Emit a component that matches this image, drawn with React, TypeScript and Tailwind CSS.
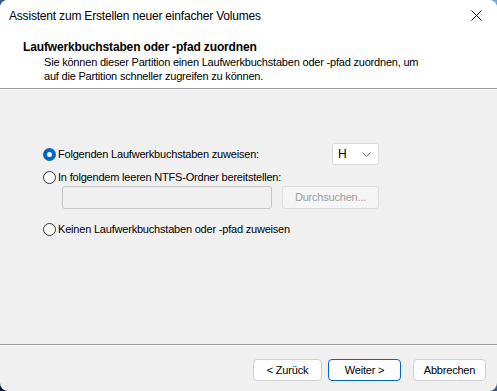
import React from "react";

function Radio({ checked }: { checked?: boolean }) {
  if (checked) {
    return (
      <span className="flex h-[13px] w-[13px] shrink-0 items-center justify-center rounded-full bg-[#0067c0]">
        <span className="h-[5px] w-[5px] rounded-full bg-white" />
      </span>
    );
  }
  return <span className="block h-[13px] w-[13px] shrink-0 rounded-full border border-[#333] bg-white" />;
}

export default function App() {
  return (
    <div
      className="h-[391px] w-[497px] overflow-hidden bg-gradient-to-tr from-[#0a1a38] to-[#6fa7d6] text-[11px] leading-none tracking-[-0.2px] text-black"
      style={{ fontFamily: '"Liberation Sans", Arial, sans-serif' }}
    >
      <div className="flex h-full w-full flex-col overflow-hidden rounded-[8px] bg-[#f0f0f0]">
        {/* title + header */}
        <div className="bg-white">
          <div className="flex h-[30px] items-center pl-[9px] pr-[14px]">
            <span className="flex-1 pt-[1px] text-[12px] tracking-[-0.19px]">
              Assistent zum Erstellen neuer einfacher Volumes
            </span>
            <svg width="11" height="11" viewBox="0 0 11 11" className="mr-[1px]">
              <path d="M0.5 0.5 L10.5 10.5 M10.5 0.5 L0.5 10.5" stroke="#111" strokeWidth="1" />
            </svg>
          </div>
          <div className="pl-[23px] pt-[11px]">
            <div className="h-[12px] text-[12px] font-bold tracking-[-0.15px]">
              Laufwerkbuchstaben oder -pfad zuordnen
            </div>
            <div className="mt-[2px] pl-[21px] leading-[14px]">
              Sie können dieser Partition einen Laufwerkbuchstaben oder -pfad zuordnen, um
              <br />
              auf die Partition schneller zugreifen zu können.
            </div>
          </div>
          <div className="h-[5px]" />
        </div>
        <div className="h-[1px] bg-[#a0a0a0]" />
        <div className="h-[1px] bg-white" />

        {/* body */}
        <div className="flex-1 pl-[43px] pt-[53px]">
          <div className="flex h-[22px] w-[336px] items-center">
            <Radio checked />
            <span className="ml-[2px] flex-1">Folgenden Laufwerkbuchstaben zuweisen:</span>
            <div className="flex h-[22px] w-[47px] items-center justify-between rounded-[3px] border border-[#dcdcdc] bg-white pl-[5px] pr-[7px]">
              <span className="text-[12px]">H</span>
              <svg width="9" height="5" viewBox="0 0 9 5">
                <path d="M0.5 0.5 L4.5 4.5 L8.5 0.5" stroke="#666" strokeWidth="1" fill="none" />
              </svg>
            </div>
          </div>
          <div className="mt-[4px] flex h-[16px] items-center">
            <Radio />
            <span className="ml-[2px]">In folgendem leeren NTFS-Ordner bereitstellen:</span>
          </div>
          <div className="mt-[1px] flex pl-[19px]">
            <div className="h-[23px] w-[210px] rounded-[3px] border border-[#c6c6c6] bg-[#f0f0f0]" />
            <div className="ml-[10px] flex h-[23px] w-[97px] items-center justify-center rounded-[3px] border border-[#dcdcdc] bg-[#f5f5f5] text-[#9d9d9d]">
              Durchsuchen...
            </div>
          </div>
          <div className="mt-[12px] flex h-[16px] items-center">
            <Radio />
            <span className="ml-[2px]">Keinen Laufwerkbuchstaben oder -pfad zuweisen</span>
          </div>
        </div>

        {/* footer */}
        <div className="h-[1px] bg-[#a0a0a0]" />
        <div className="h-[1px] bg-white" />
        <div className="flex h-[45px] items-start pt-[13px] pl-[253px]">
          <div className="flex h-[22px] w-[69px] items-center justify-center rounded-[4px] border border-[#d0d0d0] bg-[#fdfdfd]">
            &lt; Zurück
          </div>
          <div className="ml-[6px] flex h-[22px] w-[73px] items-center justify-center rounded-[4px] border-[1.5px] border-[#0067c0] bg-[#fdfdfd]">
            Weiter &gt;
          </div>
          <div className="ml-[12px] flex h-[22px] w-[73px] items-center justify-center rounded-[4px] border border-[#d0d0d0] bg-[#fdfdfd]">
            Abbrechen
          </div>
        </div>
      </div>
    </div>
  );
}
